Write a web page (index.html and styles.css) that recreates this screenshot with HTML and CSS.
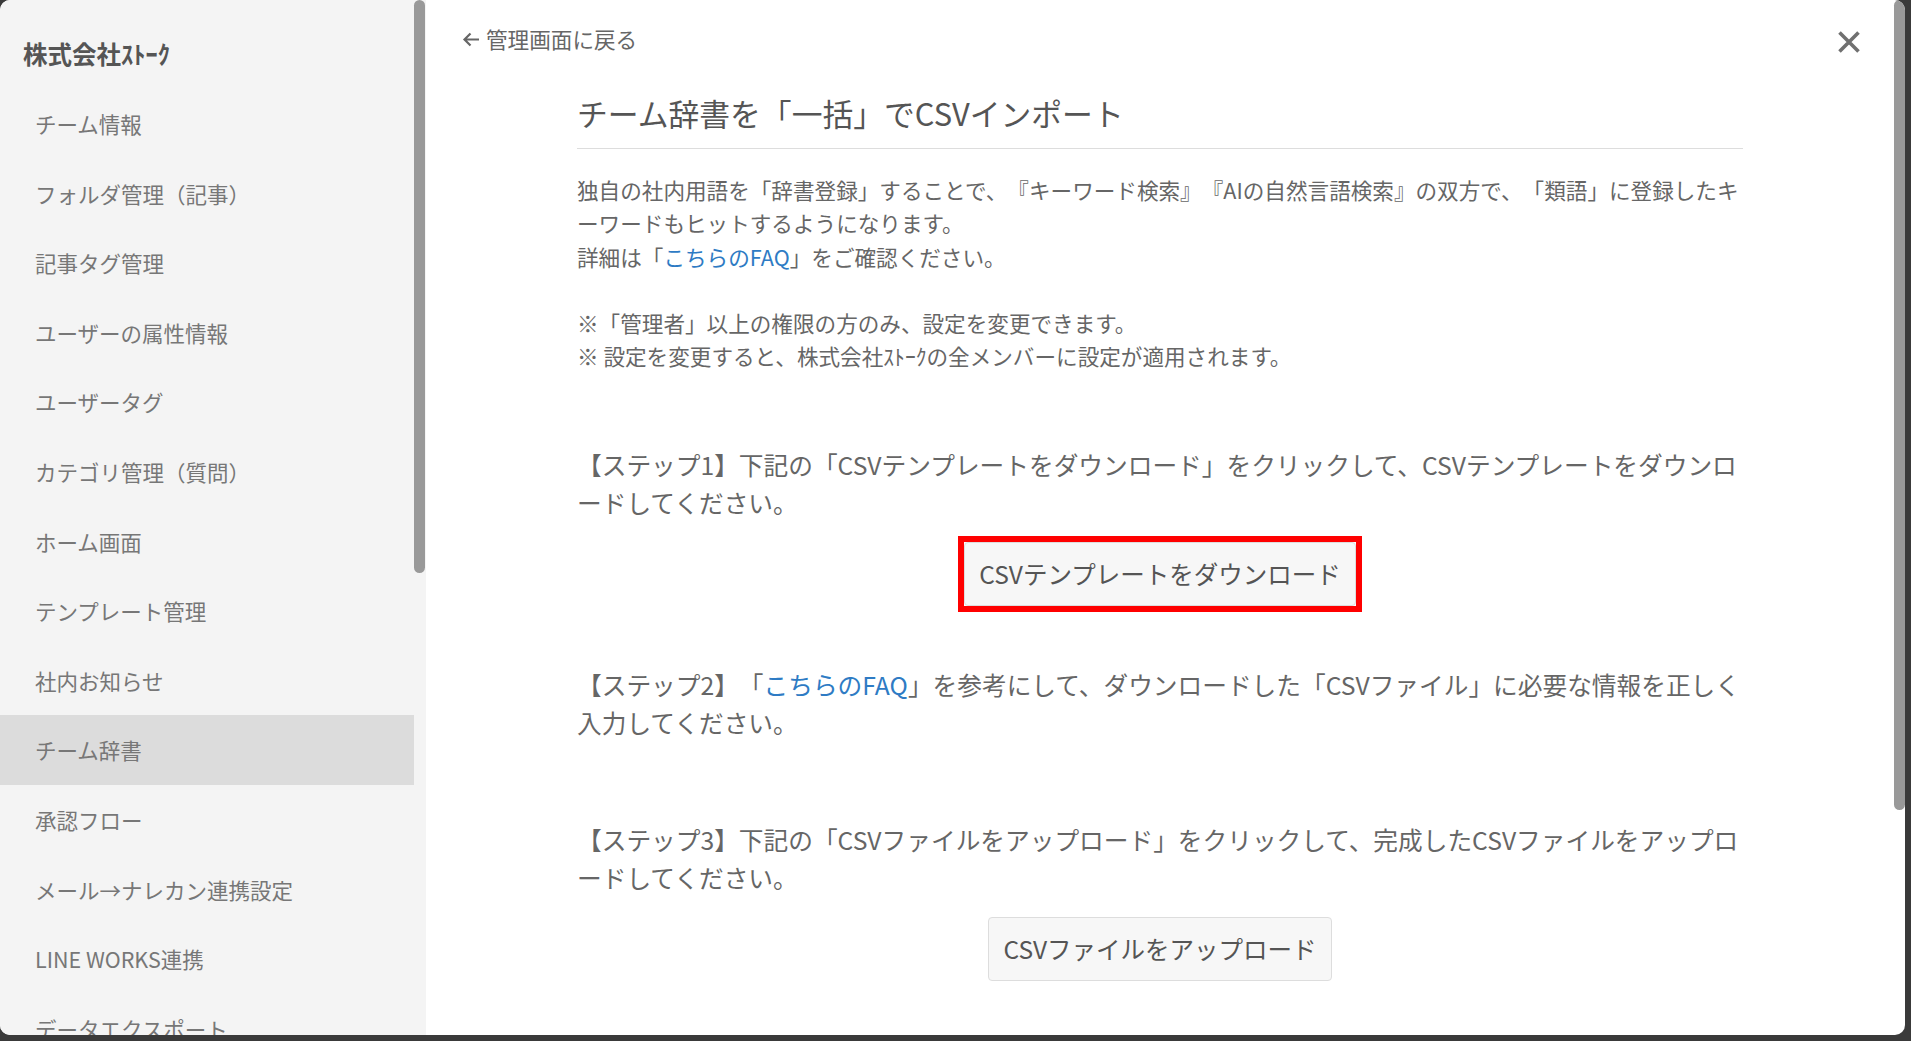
FILE: index.html
```html
<!DOCTYPE html>
<html lang="ja">

<head>
    <meta charset="UTF-8">
    <meta name="viewport" content="width=device-width, initial-scale=1.0">
    <title>チーム辞書 - 管理画面</title>
    <link rel="stylesheet" href="styles.css">
</head>

<body>

    <div class="modal">
        <aside class="sidebar">
            <div class="company-name">株式会社ｽﾄｰｸ</div>
            <ul class="menu">
                <li>チーム情報</li>
                <li>フォルダ管理（記事）</li>
                <li>記事タグ管理</li>
                <li>ユーザーの属性情報</li>
                <li>ユーザータグ</li>
                <li>カテゴリ管理（質問）</li>
                <li>ホーム画面</li>
                <li>テンプレート管理</li>
                <li>社内お知らせ</li>
                <li class="active">チーム辞書</li>
                <li>承認フロー</li>
                <li>メール→ナレカン連携設定</li>
                <li>LINE WORKS連携</li>
                <li>データエクスポート</li>
            </ul>
        </aside>
        <div class="scroll-thumb sidebar-thumb"></div>

        <main class="main">
            <a class="back-link" href="#">
                <svg width="18" height="15" viewBox="0 0 18 15">
                    <path d="M17 7.5H2.5M8.5 1.5L2.5 7.5L8.5 13.5" fill="none" stroke="#666" stroke-width="2.2" />
                </svg>
                管理画面に戻る
            </a>

            <div class="content">
                <h2 class="page-title">チーム辞書を「一括」でCSVインポート</h2>

                <p class="description">
                    独自の社内用語を「辞書登録」することで、『キーワード検索』『AIの自然言語検索』の双方で、「類語」に登録したキーワードもヒットするようになります。<br>
                    詳細は「<a href="#" class="link">こちらのFAQ</a>」をご確認ください。<br>
                    <br>
                    ※「管理者」以上の権限の方のみ、設定を変更できます。<br>
                    ※ 設定を変更すると、株式会社ｽﾄｰｸの全メンバーに設定が適用されます。
                </p>

                <div class="steps">
                    <section class="step">
                        <p>【ステップ1】下記の「CSVテンプレートをダウンロード」をクリックして、CSVテンプレートをダウンロードしてください。</p>
                        <div class="step-action">
                            <span class="highlight"><button class="btn">CSVテンプレートをダウンロード</button></span>
                        </div>
                    </section>

                    <section class="step step-plain">
                        <p>【ステップ2】「<a href="#" class="link">こちらのFAQ</a>」を参考にして、ダウンロードした「CSVファイル」に必要な情報を正しく入力してください。</p>
                    </section>

                    <section class="step">
                        <p>【ステップ3】下記の「CSVファイルをアップロード」をクリックして、完成したCSVファイルをアップロードしてください。</p>
                        <div class="step-action">
                            <button class="btn">CSVファイルをアップロード</button>
                        </div>
                    </section>
                </div>
            </div>
        </main>
        <div class="scroll-thumb main-thumb"></div>

        <button class="close-btn" aria-label="閉じる">
            <svg width="24" height="24" viewBox="0 0 24 24">
                <path d="M2.5 2.5L21.5 21.5M21.5 2.5L2.5 21.5" stroke="#707070" stroke-width="3.6" />
            </svg>
        </button>
    </div>

</body>

</html>
```

FILE: styles.css
```css
* {
    box-sizing: border-box;
}

body {
    margin: 0;
    background-color: #3a3a3a;
    font-family: "Noto Sans CJK JP", "Noto Sans", sans-serif;
    color: #666;
    overflow: hidden;
}

.modal {
    position: relative;
    display: flex;
    width: 1905px;
    height: 1035px;
    background-color: #fff;
    border-radius: 10px;
    overflow: hidden;
    line-break: loose;
    text-spacing-trim: space-all;
}

/* scrollbar thumbs */
.scroll-thumb {
    position: absolute;
    top: 0;
    width: 11px;
    background-color: #999;
    border-radius: 6px;
}

.sidebar-thumb {
    left: 414px;
    height: 573px;
}

.main-thumb {
    right: 0;
    height: 810px;
}

/* sidebar */
.sidebar {
    flex: 0 0 426px;
    height: 100%;
    overflow: hidden;
    background-color: #f4f4f4;
    padding: 36px 12px 0 0;
}

.company-name {
    padding-left: 23px;
    margin-bottom: 17px;
    font-size: 24.5px;
    line-height: 36px;
    font-weight: bold;
    color: #555;
}

.menu {
    list-style: none;
    margin: 0;
    padding: 0;
}

.menu li {
    height: 69.6px;
    line-height: 69.6px;
    padding-left: 35px;
    font-size: 21.5px;
    color: #777;
    white-space: nowrap;
}

.menu li.active {
    background-color: #dcdcdc;
}

/* main */
.main {
    flex: 1;
    height: 100%;
    overflow: hidden;
    padding: 23px 11px 0 0;
}

.back-link {
    display: inline-flex;
    align-items: center;
    gap: 6px;
    margin-left: 36px;
    font-size: 21.6px;
    line-height: 32px;
    color: #666;
    text-decoration: none;
}

.close-btn {
    position: absolute;
    top: 30px;
    right: 44px;
    padding: 0;
    border: none;
    background: none;
    line-height: 0;
}

.content {
    max-width: 1166px;
    margin: 35px auto 0;
}

.page-title {
    margin: 0;
    padding-bottom: 12px;
    border-bottom: 1px solid #ddd;
    font-size: 30.8px;
    line-height: 46px;
    font-weight: normal;
    color: #555;
}

.description {
    margin: 24px 0 0;
    font-size: 21.6px;
    line-height: 33.3px;
}

.link {
    color: #2e7bc4;
    text-decoration: none;
}

.steps {
    margin-top: 72px;
}

.step {
    font-size: 24.7px;
    line-height: 38px;
}

.step p {
    margin: 0;
}

.step + .step {
    margin-top: 59px;
}

.step-plain {
    padding-bottom: 20px;
}

.step-action {
    margin-top: 21px;
    text-align: center;
    line-height: 0;
}

.highlight {
    display: inline-block;
    margin: -6px;
    border: 6px solid #f00;
}

.btn {
    display: inline-block;
    padding: 13px 14px;
    background-color: #f7f7f7;
    border: 1px solid #ddd;
    border-radius: 4px;
    font-family: inherit;
    font-size: 24.5px;
    line-height: 36px;
    color: #555;
    vertical-align: top;
}
```
